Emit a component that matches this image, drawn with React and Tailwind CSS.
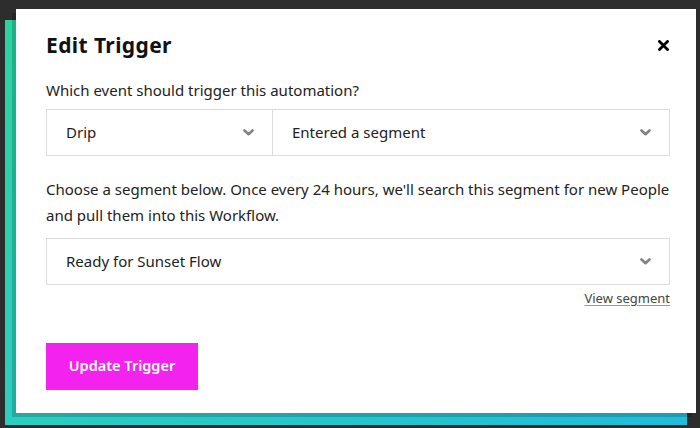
import React from "react";

const Chevron = () => (
  <svg width="11" height="7" viewBox="0 0 11 7" className="shrink-0">
    <path d="M1.5 1.5 L5.5 5.2 L9.5 1.5" fill="none" stroke="#838383" strokeWidth="2.6" strokeLinecap="round" strokeLinejoin="round" />
  </svg>
);

const SelectBox = ({ label, className = "" }) => (
  <div className={"flex items-center justify-between h-full pl-[19px] pr-[18px] " + className}>
    <span className="text-[15px] text-[#222]">{label}</span>
    <Chevron />
  </div>
);

const App = () => {
  return (
    <div
      className="relative w-[700px] h-[428px] overflow-hidden bg-[#2d2d2d] pt-[9px] pl-[16px]"
      style={{ fontFamily: "'Noto Sans', 'Open Sans', sans-serif" }}
    >
      <div className="absolute left-0 top-[36px] text-[15px] font-bold text-[#111] -translate-x-[7px]">s</div>
      {/* teal card behind the modal */}
      <div className="absolute left-[5px] top-[20px] w-[682px] h-[405px] bg-gradient-to-br from-[#2ad3a0] via-[#2ccdc0] to-[#22bcd9]" />

      <div className="relative w-[680px] h-[404px] bg-white shadow-[-4px_4px_0_rgba(0,0,0,0.17)] pl-[30px] pr-[26px] pt-[22px]">
        <div className="flex items-center justify-between">
          <h2 className="text-[21px] font-bold text-[#111] tracking-[0.4px] leading-[28px]">Edit Trigger</h2>
          <svg width="11" height="11" viewBox="0 0 11 11" className="mr-[1px]">
            <path d="M1.5 1.5 L9.5 9.5 M9.5 1.5 L1.5 9.5" stroke="#000" strokeWidth="2.8" strokeLinecap="square" />
          </svg>
        </div>

        <p className="mt-[21px] text-[15px] text-[#222] leading-[20px]">Which event should trigger this automation?</p>

        <div className="mt-[9px] flex h-[47px] border border-[#dcdcdc]">
          <SelectBox label="Drip" className="w-[226px] border-r border-[#dcdcdc]" />
          <SelectBox label="Entered a segment" className="flex-1" />
        </div>

        <p className="mt-[20px] text-[15px] text-[#222] leading-[26px]">
          Choose a segment below. Once every 24 hours, we'll search this segment for new People and pull them into this Workflow.
        </p>

        <div className="mt-[10px] h-[47px] border border-[#dcdcdc]">
          <SelectBox label="Ready for Sunset Flow" />
        </div>

        <div className="flex justify-end mt-[4px]">
          <a className="text-[13px] text-[#444] underline underline-offset-2 decoration-[#999]">View segment</a>
        </div>

        <button className="mt-[34px] w-[152px] h-[47px] bg-[#f322ee] text-white text-[14.5px] font-semibold">
          Update Trigger
        </button>
      </div>
    </div>
  );
};

export default App;
